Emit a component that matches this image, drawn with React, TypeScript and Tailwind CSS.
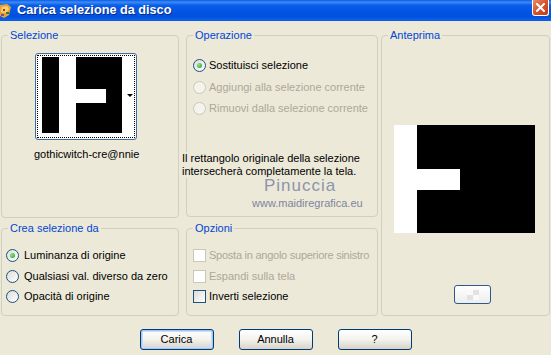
import React from "react";

function Radio({ checked, disabled }: { checked?: boolean; disabled?: boolean }) {
  return (
    <div
      className={`w-[13px] h-[13px] rounded-full border flex items-center justify-center shrink-0 ${
        disabled ? "border-[#CAC8BB] bg-[#F4F3EE]" : "border-[#1C5180] bg-linear-to-br from-[#DCDCD7] to-white"
      }`}
    >
      {checked && <div className="w-[5px] h-[5px] rounded-full bg-[radial-gradient(circle_at_35%_35%,#8BE88B,#1E9B1E)]" />}
    </div>
  );
}

function Check({ disabled }: { disabled?: boolean }) {
  return (
    <div
      className={`w-[13px] h-[13px] border shrink-0 ${
        disabled ? "border-[#CAC8BB] bg-white" : "border-[#1C5180] bg-linear-to-br from-[#DCDCD7] to-white"
      }`}
    />
  );
}

function Group({ label, className, children }: { label: string; className?: string; children?: React.ReactNode }) {
  return (
    <fieldset className={`border border-[#D0D0BF] rounded-[4px] min-w-0 ${className ?? ""}`}>
      <legend className="ml-[6px] px-[2px] leading-[13px] text-[#0046D5]">{label}</legend>
      {children}
    </fieldset>
  );
}

function Button({ label, def }: { label: string; def?: boolean }) {
  return (
    <div
      className={`w-[74px] h-[21px] rounded-[3px] border border-[#003C74] bg-linear-to-b from-white via-[#F3F2EC] to-[#D8D3C8] flex items-center justify-center ${
        def ? "shadow-[inset_0_0_0_1px_#A8C6F2,inset_0_0_0_2px_#C9DCF8]" : ""
      }`}
    >
      {label}
    </div>
  );
}

export default function App() {
  return (
    <div className="w-[551px] h-[355px] overflow-hidden bg-[#ECE9D8] flex flex-col font-['Liberation_Sans',Arial,sans-serif] text-[11px] text-black">
      {/* Title bar */}
      <div className="h-[21px] shrink-0 flex items-start bg-[linear-gradient(to_bottom,#0A5BE6_0%,#3C8CF5_10%,#0A5DEA_25%,#0155E2_55%,#0152DD_80%,#0C62F0_95%,#0A56D8_100%)]">
        <div className="w-[16px] h-[21px] flex items-center">
          <svg width="13" height="16" viewBox="0 0 13 16">
            <path d="M0 2 L7 1 L11 4 L9 12 L4 15 L0 13 Z" fill="#E8A23A" />
            <path d="M2 4 L7 3 L9 6 L6 10 L1 9 Z" fill="#F6D36A" />
            <rect x="3" y="6" width="2" height="2" fill="#C0281E" />
            <rect x="6" y="9" width="3" height="2" fill="#3A7A2A" />
            <rect x="1" y="11" width="3" height="2" fill="#7A4A9A" />
          </svg>
        </div>
        <div className="h-[21px] flex items-center ml-[1px] text-white font-bold text-[12.7px] whitespace-nowrap [text-shadow:1px_1px_0_#0A2A8A]">
          Carica selezione da disco
        </div>
        <div className="flex-1" />
        <div className="mr-[2px] w-[17px] h-[16px] rounded-b-[3px] border border-t-0 border-white bg-linear-to-br from-[#E88A6A] via-[#D9522B] to-[#C23A18] flex items-center justify-center">
          <svg width="9" height="9" viewBox="0 0 9 9">
            <path d="M1 1 L8 8 M8 1 L1 8" stroke="white" strokeWidth="2" strokeLinecap="square" />
          </svg>
        </div>
      </div>

      {/* Body */}
      <div className="flex px-[1px] pt-[8px]">
        {/* Left column */}
        <div className="w-[178px] flex flex-col">
          <Group label="Selezione" className="h-[189px]">
            <div className="flex flex-col">
              <div className="ml-[33px] mt-[11px] w-[102px] h-[87px] rounded-[3px] border border-[#3C6E9E] bg-[#F7F6F2] p-[1px]">
                <div className="w-full h-full border border-dotted border-black bg-white flex items-start">
                  <svg className="ml-[4px] mt-[1px]" width="80" height="76" viewBox="0 0 80 76">
                    <rect width="80" height="76" fill="#000" />
                    <rect x="17" y="0" width="17" height="76" fill="#fff" />
                    <rect x="34" y="32" width="30" height="14" fill="#fff" />
                  </svg>
                  <div className="self-center ml-[5px] mt-[-2px] w-0 h-0 border-l-[3px] border-r-[3px] border-t-[3px] border-l-transparent border-r-transparent border-t-black" />
                </div>
              </div>
              <div className="mt-[8px] ml-[32px] leading-[13px] whitespace-nowrap">gothicwitch-cre@nnie</div>
            </div>
          </Group>
          <Group label="Crea selezione da" className="mt-[4px] h-[94px]">
            <div className="flex flex-col mt-[14px]">
              <div className="flex items-center h-[13px] ml-[4px]">
                <Radio checked />
                <span className="ml-[5px] leading-[13px] whitespace-nowrap">Luminanza di origine</span>
              </div>
              <div className="flex items-center h-[13px] ml-[4px] mt-[8px]">
                <Radio />
                <span className="ml-[5px] leading-[13px] whitespace-nowrap">Qualsiasi val. diverso da zero</span>
              </div>
              <div className="flex items-center h-[13px] ml-[4px] mt-[7px]">
                <Radio />
                <span className="ml-[5px] leading-[13px] whitespace-nowrap">Opacità di origine</span>
              </div>
            </div>
          </Group>
        </div>

        {/* Middle column */}
        <div className="ml-[7px] w-[192px] flex flex-col">
          <Group label="Operazione" className="h-[188px]">
            <div className="flex flex-col mt-[17px]">
              <div className="flex items-center h-[13px] ml-[6px]">
                <Radio checked />
                <span className="ml-[3px] leading-[13px] whitespace-nowrap">Sostituisci selezione</span>
              </div>
              <div className="flex items-center h-[13px] ml-[6px] mt-[9px] text-[#ACA899]">
                <Radio disabled />
                <span className="ml-[3px] leading-[13px] whitespace-nowrap">Aggiungi alla selezione corrente</span>
              </div>
              <div className="flex items-center h-[13px] ml-[6px] mt-[8px] text-[#ACA899]">
                <Radio disabled />
                <span className="ml-[3px] leading-[13px] whitespace-nowrap">Rimuovi dalla selezione corrente</span>
              </div>
              <div className="mt-[37px] ml-[-5px] leading-[13px] bg-[#ECE9D8] w-[190px] whitespace-nowrap">
                Il rettangolo originale della selezione
                <br />
                intersecherà completamente la tela.
              </div>
              <div className="ml-[77px] mt-[-1px] leading-[17px] text-[17px] tracking-[1px] text-[#8C94AC] whitespace-nowrap">Pinuccia</div>
              <div className="ml-[65px] mt-[3px] leading-[12px] text-[11px] text-[#7E859B] whitespace-nowrap">www.maidiregrafica.eu</div>
            </div>
          </Group>
          <Group label="Opzioni" className="mt-[5px] h-[94px]">
            <div className="flex flex-col mt-[14px]">
              <div className="flex items-center h-[13px] ml-[6px] text-[#ACA899]">
                <Check disabled />
                <span className="ml-[3px] leading-[13px] whitespace-nowrap tracking-[-0.25px]">Sposta in angolo superiore sinistro</span>
              </div>
              <div className="flex items-center h-[13px] ml-[6px] mt-[8px] text-[#ACA899]">
                <Check disabled />
                <span className="ml-[3px] leading-[13px] whitespace-nowrap">Espandi sulla tela</span>
              </div>
              <div className="flex items-center h-[13px] ml-[6px] mt-[7px]">
                <Check />
                <span className="ml-[3px] leading-[13px] whitespace-nowrap">Inverti selezione</span>
              </div>
            </div>
          </Group>
        </div>

        {/* Right column */}
        <div className="ml-[3px] w-[169px]">
          <Group label="Anteprima" className="h-[287px]">
            <div className="flex flex-col">
              <svg className="ml-[12px] mt-[83px]" width="141" height="108" viewBox="0 0 141 108">
                <rect width="141" height="108" fill="#000" />
                <rect x="0" y="0" width="23" height="108" fill="#fff" />
                <rect x="23" y="44" width="43" height="21" fill="#fff" />
              </svg>
              <div className="ml-[72px] mt-[52px] w-[37px] h-[19px] rounded-[3px] border border-[#2C5A8C] bg-linear-to-b from-white to-[#EDEDEA] flex items-center justify-center">
                <div className="grid grid-cols-2">
                  <div className="w-[6px] h-[5px] bg-[#FAFAFA]" />
                  <div className="w-[6px] h-[5px] bg-[#E2E2E2]" />
                  <div className="w-[6px] h-[5px] bg-[#E2E2E2]" />
                  <div className="w-[6px] h-[5px] bg-[#FAFAFA]" />
                </div>
              </div>
            </div>
          </Group>
        </div>
      </div>

      {/* Buttons */}
      <div className="flex justify-center gap-[25px] mt-[13px]">
        <Button label="Carica" def />
        <Button label="Annulla" />
        <Button label="?" />
      </div>
    </div>
  );
}
